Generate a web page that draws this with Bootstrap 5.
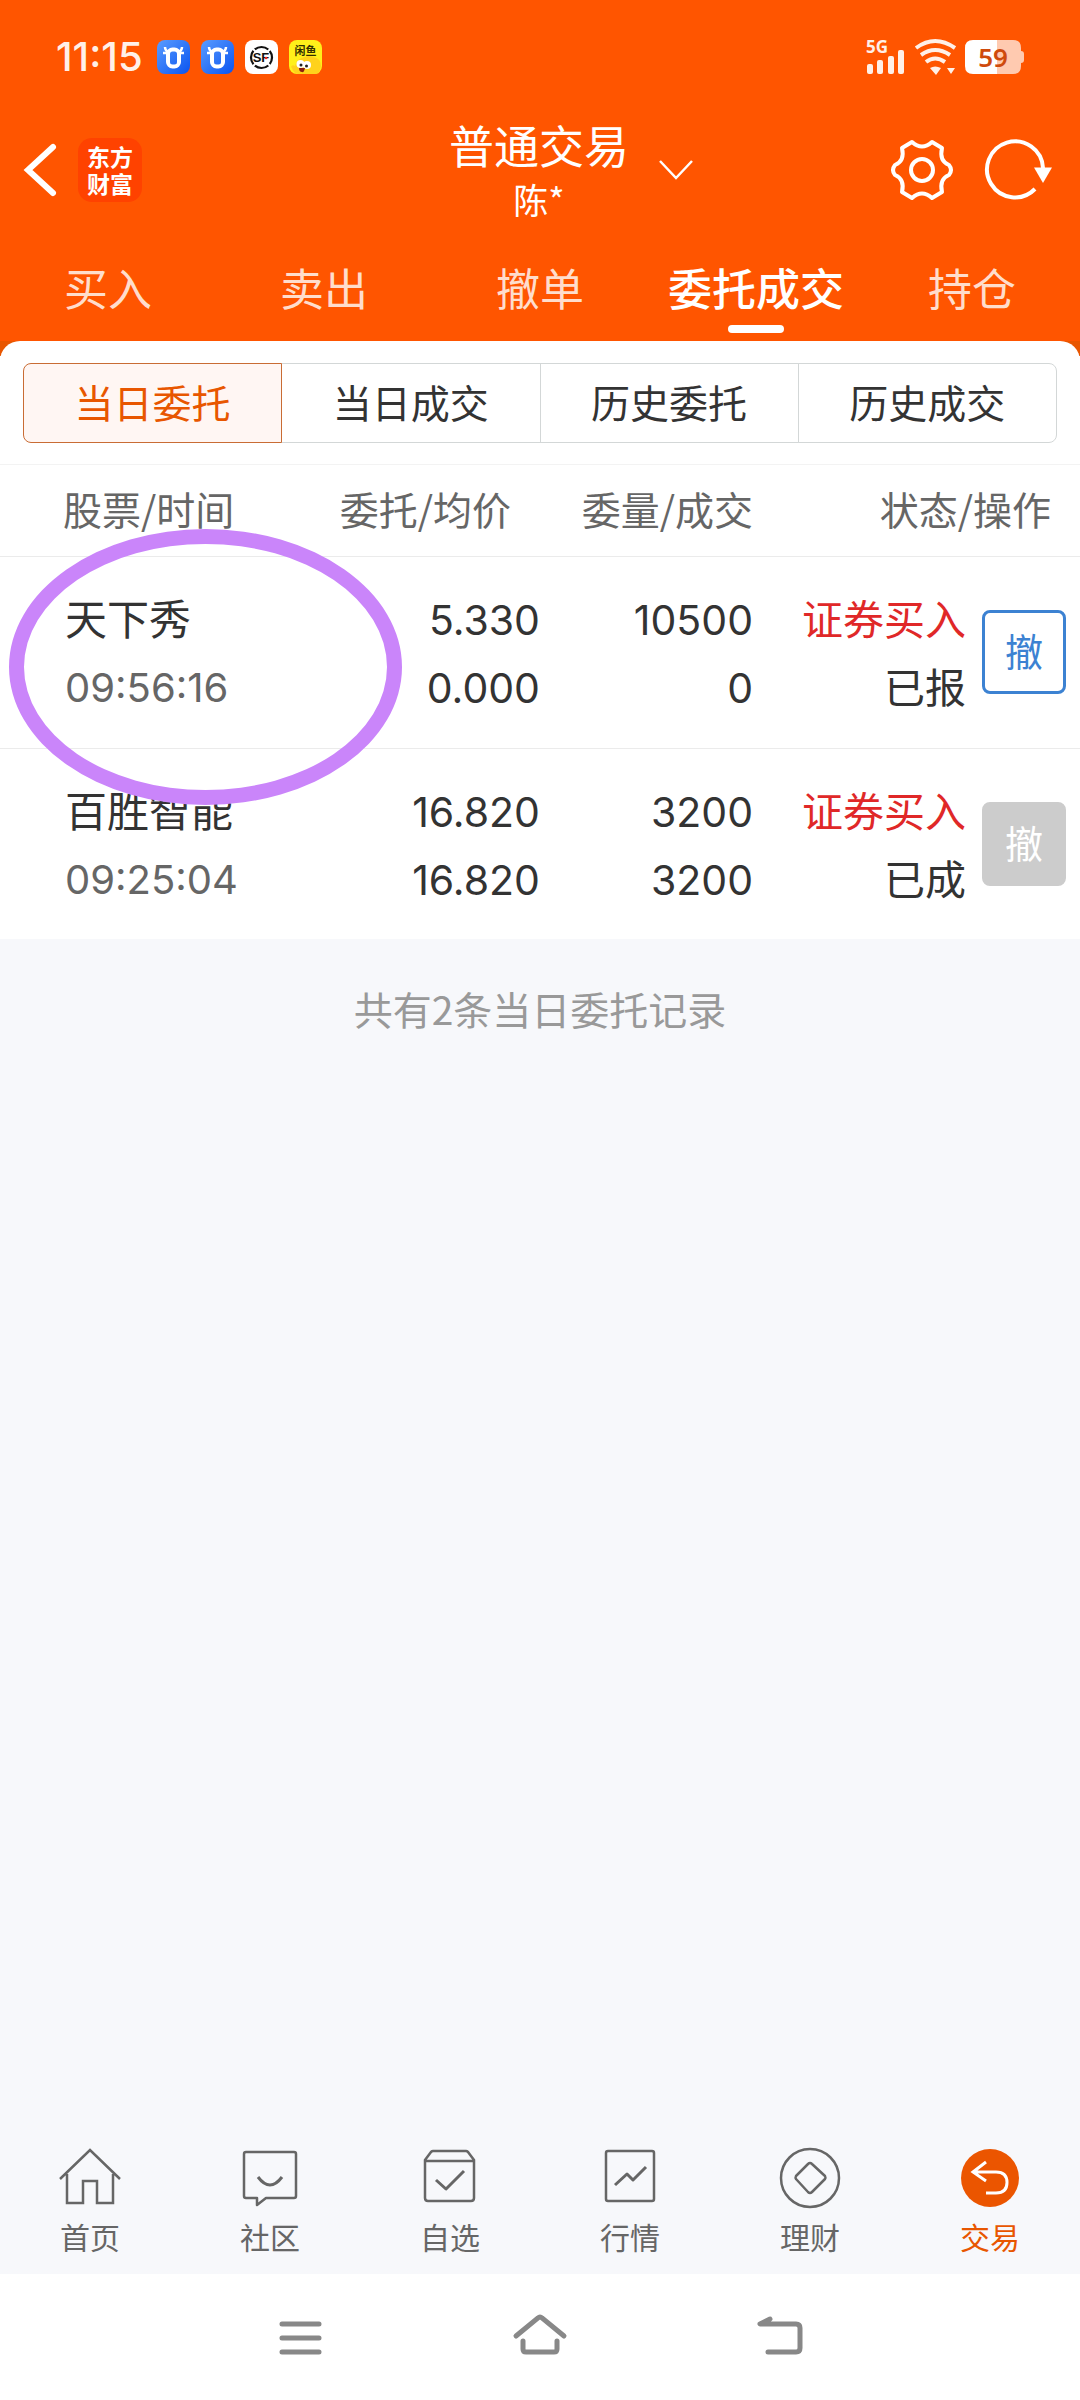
<!DOCTYPE html>
<html lang="zh-CN">
<head>
<meta charset="utf-8">
<meta name="viewport" content="width=device-width, initial-scale=1">
<title>普通交易</title>
<link href="https://cdn.jsdelivr.net/npm/bootstrap@5.3.0/dist/css/bootstrap.min.css" rel="stylesheet">
<style>
  :root { --brand: #ff5500; --brand-deep: #e85600; --ink: #333; --soft: #666; --page: #f7f8fb; }
  body { font-family: Inter, "Noto Sans CJK SC", sans-serif; background: var(--page); color: var(--ink); }
  svg { display: block; flex: none; overflow: visible; }
  a { text-decoration: none; color: inherit; }
  .cjk { font-family: "Noto Sans CJK SC", sans-serif; }
  .top-area { background: var(--brand); color: #fff; }

  .status-line { height: 114px; padding: 0 56px; }
  .clock { font-size: 40px; line-height: 48px; font-weight: 500; color: #fff0e8; margin-right: 14px; }
  .app-icons { gap: 11px; }
  .signals { gap: 9px; }

  .title-bar { height: 112px; padding: 0 28px 0 24px; }
  .title-side { flex: 1 1 0; }
  .icon-btn { background: none; border: 0; padding: 0; color: inherit; }
  .brand-tile { width: 64px; height: 64px; border-radius: 14px; background: #ff4200; font-size: 23px; line-height: 27px; font-weight: 700; margin-left: 22px; }
  .account { font-size: 45px; line-height: 54px; padding-top: 4px; }
  .account-name { font-size: 35px; line-height: 54px; }
  .account-btn { gap: 30px; padding-left: 66px; }

  .main-tabs { height: 115px; }
  .main-tabs a { flex: 1 1 0; font-size: 44px; line-height: 60px; padding-top: 31px; color: #ffddcc; position: relative; }
  .main-tabs a.active { color: #fff; font-weight: 500; }
  .main-tabs a.active::after { content: ""; position: absolute; left: 50%; bottom: 8px; width: 56px; height: 8px; margin-left: -28px; border-radius: 4px; background: #fff; }

  .sheet-back { background: linear-gradient(var(--brand-deep) 15px, #fff 15px); }
  .sheet { background: #fff; border-radius: 20px 20px 0 0; }
  .segments { padding: 22px 23px 21px; border-bottom: 1px solid #f3f3f3; }
  .segments .btn { flex: 1 1 0; height: 80px; padding: 0 0 4px; font-size: 39px; line-height: 72px; color: var(--ink); border: 1px solid #d3d7d7; border-radius: 8px; background: #fff; }
  .segments .btn.active { color: var(--brand-deep); border-color: #c96c34; background: #fff6f3; }

  .orders { table-layout: fixed; width: 100%; }
  .orders th { height: 91px; padding: 0 0 4px; font-size: 39px; line-height: 58px; font-weight: 400; color: var(--soft); border-bottom: 1px solid #ebebeb; }
  .orders td { height: 192px; padding: 4px 0 0; font-size: 42px; line-height: 68px; vertical-align: middle; border-bottom: 1px solid #ebebeb; }
  .orders tbody tr:last-child td { border-bottom: 0; height: 191px; }
  .orders th:first-child { padding-left: 63px; }
  .orders td:first-child { padding-left: 65px; }
  .orders th:nth-child(2) { padding-right: 29px; }
  .orders th:nth-child(3), .orders td:nth-child(3) { padding-right: 3px; }
  .orders th:last-child { padding-right: 29px; }
  .orders td:last-child { padding: 0 14px 0 0; }
  .orders td.figures { font-size: 41px; }
  .order-time { font-size: 40px; color: var(--soft); }
  .deal { gap: 16px; font-size: 41px; }
  .deal-text { padding-top: 4px; }
  .buy { color: #e02828; }
  .cancel { width: 84px; height: 84px; padding: 0 0 4px; font-size: 38px; line-height: 72px; border: 3px solid #3c82d2; border-radius: 8px; color: #3c82d2; background: #fff; }
  .cancel:disabled { border-color: #ccc; background: #ccc; color: #fff; opacity: 1; }
  .highlight-ring { position: absolute; left: 9px; top: 64px; width: 393px; height: 276px; border: 15px solid #ca85fa; border-radius: 50%; pointer-events: none; }

  .summary { font-size: 39px; line-height: 58px; color: #999; padding-top: 40px; }

  .app-nav { color: var(--soft); height: 126px; }
  .app-nav a { flex: 1 1 0; font-size: 30px; line-height: 40px; gap: 8px; }
  .app-nav a.active { color: var(--brand-deep); }
  .system-nav { background: #fff; height: 126px; padding-top: 2px; gap: 180px; color: #888; }
  .system-nav svg { width: 60px; height: 48px; }
</style>
<script src="https://cdn.jsdelivr.net/npm/bootstrap@5.3.0/dist/js/bootstrap.bundle.min.js"></script>
</head>
<body class="d-flex flex-column min-vh-100">

<header class="top-area">
  <div class="status-line d-flex align-items-center justify-content-between">
    <div class="d-flex align-items-center">
      <span class="clock">11:15</span>
      <div class="app-icons d-flex">
        <svg width="33" height="34" viewBox="0 0 33 34"><defs><linearGradient id="bull" x1="0" y1="0" x2="1" y2="1"><stop offset="0" stop-color="#5a9cff"/><stop offset="1" stop-color="#0a54f0"/></linearGradient></defs><rect width="33" height="34" rx="8" fill="url(#bull)"/><path d="M8 7q0 4 4 5M25 7q0 4-4 5M6 13h5M22 13h5" stroke="#fff" stroke-width="2.500" fill="none"/><rect x="11" y="9.500" width="11" height="17" rx="4.500" fill="none" stroke="#fff" stroke-width="4"/></svg>
        <svg width="33" height="34" viewBox="0 0 33 34"><rect width="33" height="34" rx="8" fill="url(#bull)"/><path d="M8 7q0 4 4 5M25 7q0 4-4 5M6 13h5M22 13h5" stroke="#fff" stroke-width="2.500" fill="none"/><rect x="11" y="9.500" width="11" height="17" rx="4.500" fill="none" stroke="#fff" stroke-width="4"/></svg>
        <svg width="33" height="34" viewBox="0 0 33 34"><rect width="33" height="34" rx="8" fill="#fff"/><circle cx="16.500" cy="17.500" r="10.500" fill="none" stroke="#111" stroke-width="2.200" stroke-dasharray="14.500 2" stroke-dashoffset="-9"/><text x="16" y="22" text-anchor="middle" font-family="Liberation Sans, sans-serif" font-size="13" font-weight="700" fill="#111">SF</text><circle cx="21" cy="18" r="1.300" fill="#e22"/></svg>
        <svg width="33" height="34" viewBox="0 0 33 34"><rect width="33" height="34" rx="8" fill="#fff01a"/><path d="M2 27q1-3 4-1 2-8 10-9 4-2 8 0 8 1 8 9l-2 7q-2 1-5 1H9q-5-1-6-6z" fill="#ffd21c"/><circle cx="11.500" cy="24" r="4" fill="#fff"/><circle cx="18" cy="25" r="4" fill="#fff"/><circle cx="12" cy="25" r="1.500" fill="#222"/><circle cx="17.500" cy="26" r="1.500" fill="#222"/><path d="M10 28h6q-1 5-3 4-3 0-3-4z" fill="#8c1d10"/><text x="16.500" y="15" text-anchor="middle" font-family="Noto Sans CJK SC, sans-serif" font-size="11" font-weight="700" fill="#332f00">闲鱼</text></svg>
      </div>
    </div>
    <div class="signals d-flex align-items-center">
      <svg width="40" height="36" viewBox="0 0 40 36" fill="#fff0e8"><text x="0" y="14" font-family="Noto Sans, sans-serif" font-size="17" font-weight="700">5G</text><rect x="1" y="25" width="6" height="10" rx="2"/><rect x="11" y="21" width="6" height="14" rx="2"/><rect x="22" y="17" width="6" height="18" rx="2"/><rect x="32" y="11" width="6" height="24" rx="2"/></svg>
      <svg width="41" height="36" viewBox="0 0 41 36"><g fill="none" stroke="#fff0e8" stroke-width="4"><path d="M1 9Q20-5 40 9"/><path d="M6 16Q20 6 35 16"/><path d="M11 23Q20 16 30 23"/></g><path d="M15 29q5-3 11 0l-5 7zM32 29h8l-4 6z" fill="#fff0e8"/></svg>
      <svg width="59" height="34" viewBox="0 0 59 34"><path d="M32 0h16q8 0 8 8v3q3 0 3 3v6q0 3-3 3v3q0 8-8 8H32z" fill="#ffcab0"/><path d="M8 0h24v34H8q-8 0-8-8V8q0-8 8-8z" fill="#fff"/><text x="28" y="27" text-anchor="middle" font-family="Noto Sans, sans-serif" font-size="26" font-weight="600" fill="#cf4a0c">59</text></svg>
    </div>
  </div>

  <div class="title-bar d-flex align-items-center">
    <div class="title-side d-flex align-items-center">
      <button class="icon-btn" aria-label="返回"><svg width="32" height="52" viewBox="0 0 32 52"><path d="M29 3 4 26l25 23" fill="none" stroke="#fff" stroke-width="6" stroke-linecap="round"/></svg></button>
      <div class="brand-tile cjk d-flex align-items-center justify-content-center text-center">东方<br>财富</div>
    </div>
    <button class="icon-btn account-btn cjk d-flex align-items-center">
      <span><span class="account d-block">普通交易</span><span class="account-name d-block">陈*</span></span>
      <svg width="34" height="20" viewBox="0 0 34 20"><path d="M1 1l16 17L33 1" fill="none" stroke="#fff" stroke-width="2.500"/></svg>
    </button>
    <div class="title-side d-flex align-items-center justify-content-end">
      <button class="icon-btn me-4" aria-label="设置"><svg width="62" height="60" viewBox="0 0 62 60" fill="none" stroke="#fff" stroke-width="4" stroke-linejoin="round"><path d="M21 2Q31 11 41 2L51 8Q48 21 58 25Q62 30 58 35Q48 39 51 52L41 58Q31 49 21 58L11 52Q14 39 4 35Q0 30 4 25Q14 21 11 8Z"/><circle cx="31" cy="30" r="11"/></svg></button>
      <button class="icon-btn ms-2" aria-label="刷新"><svg width="67" height="60" viewBox="0 0 67 60"><path d="M50 49A28 28 0 1 1 58 28" fill="none" stroke="#fff" stroke-width="4"/><path d="M49 27.500h18L58 43z" fill="#fff"/></svg></button>
    </div>
  </div>

  <nav class="main-tabs cjk d-flex text-center">
    <a href="#">买入</a><a href="#">卖出</a><a href="#">撤单</a><a href="#" class="active" aria-current="page">委托成交</a><a href="#">持仓</a>
  </nav>
</header>

<main class="flex-grow-1">
  <div class="sheet-back">
    <div class="sheet">
      <div class="segments">
        <div class="btn-group d-flex cjk" role="group" aria-label="委托类型">
          <button type="button" class="btn active">当日委托</button><button type="button" class="btn">当日成交</button><button type="button" class="btn">历史委托</button><button type="button" class="btn">历史成交</button>
        </div>
      </div>
    </div>
  </div>

  <div class="position-relative bg-white">
    <table class="orders">
      <colgroup><col style="width:30%"><col style="width:20%"><col style="width:20%"><col style="width:30%"></colgroup>
      <thead class="cjk">
        <tr><th scope="col">股票/时间</th><th scope="col" class="text-end">委托/均价</th><th scope="col" class="text-end">委量/成交</th><th scope="col" class="text-end">状态/操作</th></tr>
      </thead>
      <tbody>
        <tr>
          <td>天下秀<div class="order-time">09:56:16</div></td>
          <td class="figures text-end">5.330<br>0.000</td>
          <td class="figures text-end">10500<br>0</td>
          <td><div class="deal d-flex align-items-center justify-content-end"><div class="deal-text text-end"><span class="buy">证券买入</span><br>已报</div><button class="cancel cjk">撤</button></div></td>
        </tr>
        <tr>
          <td>百胜智能<div class="order-time">09:25:04</div></td>
          <td class="figures text-end">16.820<br>16.820</td>
          <td class="figures text-end">3200<br>3200</td>
          <td><div class="deal d-flex align-items-center justify-content-end"><div class="deal-text text-end"><span class="buy">证券买入</span><br>已成</div><button class="cancel cjk" disabled>撤</button></div></td>
        </tr>
      </tbody>
    </table>
    <div class="highlight-ring"></div>
  </div>
  <p class="summary cjk text-center mb-0">共有2条当日委托记录</p>
</main>

<footer>
  <nav class="app-nav cjk d-flex text-center">
    <a href="#" class="d-flex flex-column align-items-center"><svg width="60" height="60" viewBox="0 0 60 60" fill="none" stroke="currentColor" stroke-width="2.500"><path d="M0 31 30 2l30 29M7 26v29h16V33h14v22h16V26"/></svg>首页</a>
    <a href="#" class="d-flex flex-column align-items-center"><svg width="60" height="60" viewBox="0 0 60 60" fill="none" stroke="currentColor" stroke-width="2.500" stroke-linejoin="round"><path d="M6 4h48q2 0 2 2v42q0 2-2 2H26l-9 7v-7H6q-2 0-2-2V6q0-2 2-2z"/><path d="M18 29q12 16 24 0" stroke-width="3"/></svg>社区</a>
    <a href="#" class="d-flex flex-column align-items-center"><svg width="60" height="60" viewBox="0 0 60 60" fill="none" stroke="currentColor" stroke-width="2.500" stroke-linejoin="round"><path d="M5 12l6-8q1-1 2-1h33q1 0 2 1l6 8v38q0 3-3 3H8q-3 0-3-3zM5 13h49"/><path d="M16 32l10 9 18-18" stroke-width="3"/></svg>自选</a>
    <a href="#" class="d-flex flex-column align-items-center"><svg width="60" height="60" viewBox="0 0 60 60" fill="none" stroke="currentColor" stroke-width="2.500" stroke-linejoin="round"><rect x="6" y="3" width="48" height="50" rx="2"/><path d="M15 37l12-11 6 6 13-13" stroke-width="3"/></svg>行情</a>
    <a href="#" class="d-flex flex-column align-items-center"><svg width="60" height="60" viewBox="0 0 60 60" fill="none" stroke="currentColor" stroke-width="2.500" stroke-linejoin="round"><circle cx="30" cy="30" r="29"/><path d="M28 16q2-2 4 0l13 12q1 2 0 3L32 44q-2 2-4 0L16 31q-1-1 0-3z"/></svg>理财</a>
    <a href="#" class="active d-flex flex-column align-items-center" aria-current="page"><svg width="60" height="60" viewBox="0 0 60 60"><circle cx="30" cy="30" r="29" fill="#eb5500"/><path d="M26 14 13 24l13 9M13 24h23q11 0 11 10.500T36 45H26" fill="none" stroke="#fff" stroke-width="3"/></svg>交易</a>
  </nav>
  <nav class="system-nav d-flex justify-content-center align-items-center">
    <button class="icon-btn" aria-label="菜单"><svg viewBox="0 0 60 48" stroke="currentColor" stroke-width="5" stroke-linecap="round"><path d="M12 10h37M12 24h37M12 38h37"/></svg></button>
    <button class="icon-btn" aria-label="主屏幕"><svg viewBox="0 0 60 48" fill="none" stroke="currentColor" stroke-width="5" stroke-linecap="round"><path d="M6 22 28 4q2-2 4 0l22 18M13 27v8q0 3 3 3h28q3 0 3-3v-8"/></svg></button>
    <button class="icon-btn" aria-label="后退"><svg viewBox="0 0 60 48" fill="none" stroke="currentColor" stroke-width="5" stroke-linecap="round" stroke-linejoin="round"><path d="M20 5 10 10h36q4 0 4 4v20q0 4-4 4H18"/></svg></button>
  </nav>
</footer>
</body>
</html>
